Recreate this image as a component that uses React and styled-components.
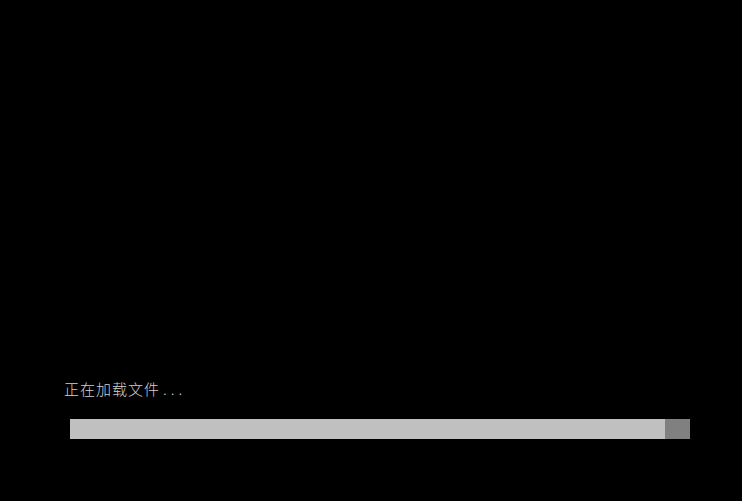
import React from "react";
import styled, { createGlobalStyle } from "styled-components";

const Global = createGlobalStyle`
  html, body { margin: 0; padding: 0; background: #000; }
  #root { width: 742px; height: 501px; }
`;

const Screen = styled.div`
  width: 742px;
  height: 501px;
  background: #000;
  box-sizing: border-box;
  padding: 379px 52px 0 64px;
  display: flex;
  flex-direction: column;
`;

const Label = styled.div`
  color: #d0d0d0;
  font-family: "Noto Sans CJK SC", "DejaVu Sans", sans-serif;
  font-weight: 300;
  font-size: 15px;
  line-height: 20px;
  letter-spacing: 1px;
  height: 20px;
`;

const Dots = styled.span`
  margin-left: 3px;
  letter-spacing: 4px;
`;

const Track = styled.div`
  margin-top: 20px;
  margin-left: 6px;
  height: 20px;
  background: #808080;
  display: flex;
`;

const Fill = styled.div`
  height: 100%;
  background: #c0c0c0;
`;

export default function App() {
  const progress = 595 / 620;
  return (
    <>
      <Global />
      <Screen>
        <Label>
          正在加载文件<Dots>...</Dots>
        </Label>
        <Track>
          <Fill style={{ width: `${progress * 100}%` }} />
        </Track>
      </Screen>
    </>
  );
}
